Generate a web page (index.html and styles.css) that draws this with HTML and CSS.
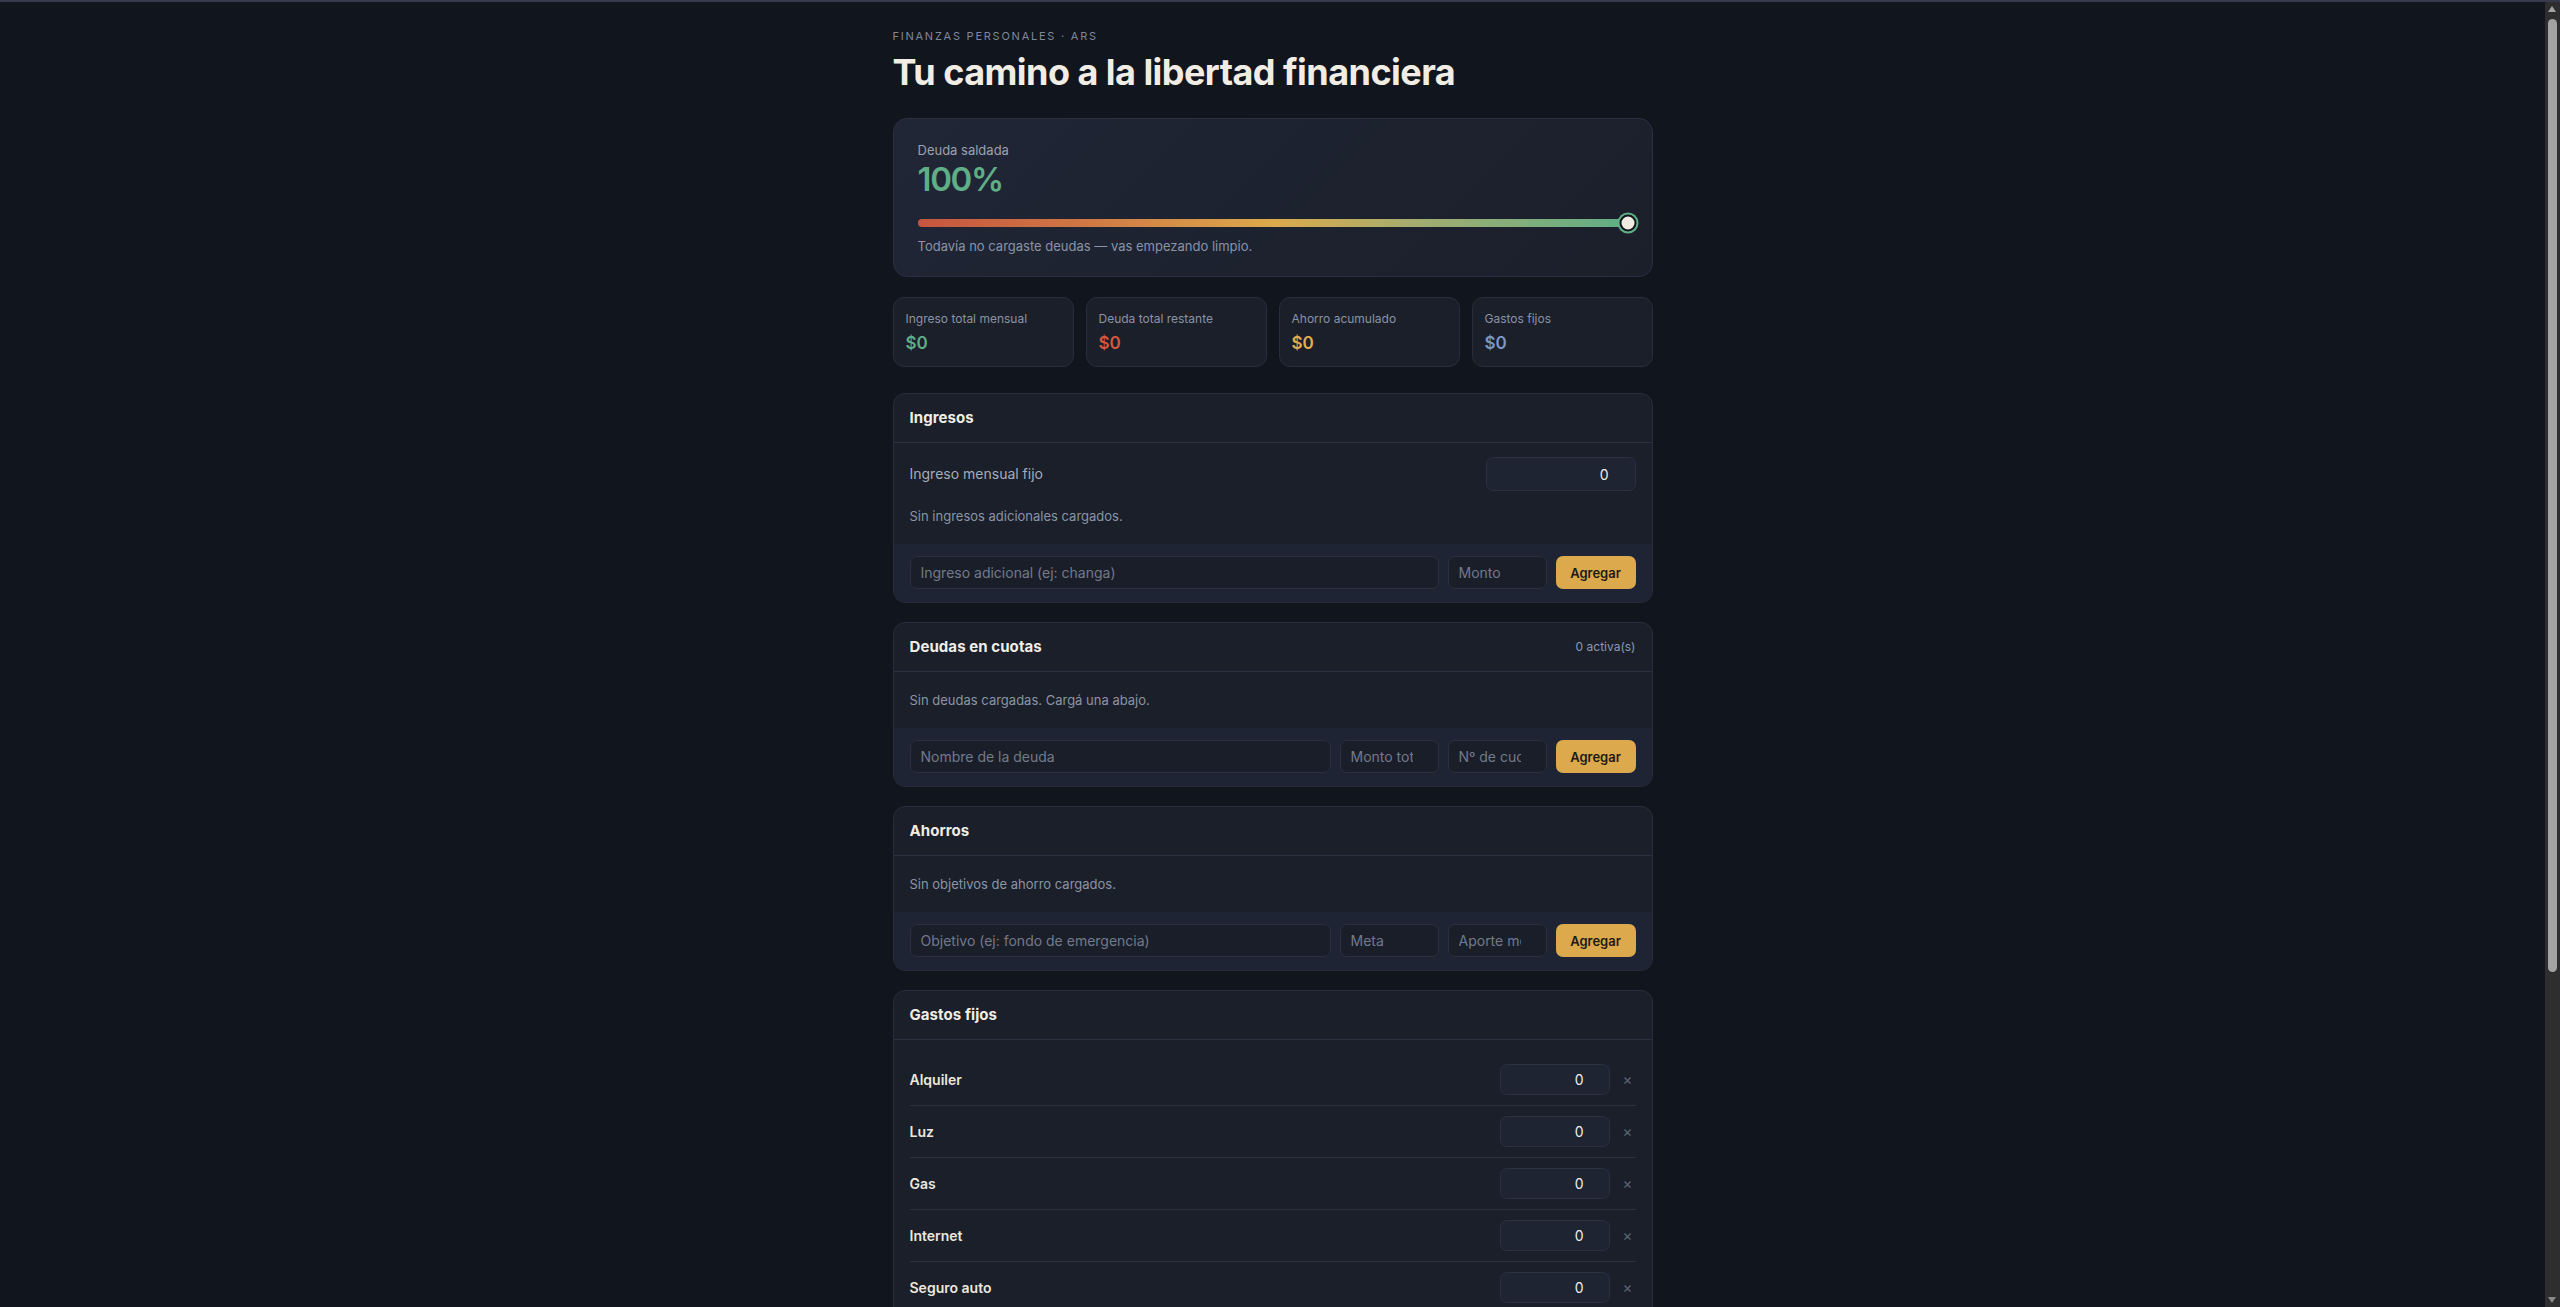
FILE: index.html
```html
<!DOCTYPE html>
<html lang="es">
<head>
<meta charset="utf-8">
<title>Finanzas personales</title>
<link rel="stylesheet" href="styles.css">
</head>
<body>
<main class="wrap">
  <header class="page-head">
    <p class="eyebrow">FINANZAS PERSONALES · ARS</p>
    <h1 class="title">Tu camino a la libertad financiera</h1>
  </header>

  <section class="progress-card">
    <div class="progress-label">Deuda saldada</div>
    <div class="progress-value">100%</div>
    <div class="bar">
      <div class="bar-fill"></div>
      <span class="knob"></span>
    </div>
    <p class="progress-note">Todavía no cargaste deudas — vas empezando limpio.</p>
  </section>

  <div class="stats">
    <div class="stat">
      <div class="stat-label">Ingreso total mensual</div>
      <div class="stat-value green">$0</div>
    </div>
    <div class="stat">
      <div class="stat-label">Deuda total restante</div>
      <div class="stat-value red">$0</div>
    </div>
    <div class="stat">
      <div class="stat-label">Ahorro acumulado</div>
      <div class="stat-value yellow">$0</div>
    </div>
    <div class="stat">
      <div class="stat-label">Gastos fijos</div>
      <div class="stat-value blue">$0</div>
    </div>
  </div>

  <section class="panel panel-first">
    <div class="panel-head">
      <h2 class="panel-title">Ingresos</h2>
    </div>
    <div class="panel-body panel-body-income">
      <div class="field-row">
        <span class="field-label">Ingreso mensual fijo</span>
        <input class="num-input num-wide" type="number" value="0">
      </div>
      <p class="empty">Sin ingresos adicionales cargados.</p>
    </div>
    <div class="panel-foot foot-income">
      <input class="text-input" type="text" placeholder="Ingreso adicional (ej: changa)">
      <input class="text-input text-num" type="number" placeholder="Monto">
      <button class="btn" type="button">Agregar</button>
    </div>
  </section>

  <section class="panel">
    <div class="panel-head">
      <h2 class="panel-title">Deudas en cuotas</h2>
      <span class="panel-meta">0 activa(s)</span>
    </div>
    <div class="panel-body">
      <p class="empty">Sin deudas cargadas. Cargá una abajo.</p>
    </div>
    <div class="panel-foot foot-triple">
      <input class="text-input" type="text" placeholder="Nombre de la deuda">
      <input class="text-input text-num" type="number" placeholder="Monto total">
      <input class="text-input text-num" type="number" placeholder="Nº de cuotas">
      <button class="btn" type="button">Agregar</button>
    </div>
  </section>

  <section class="panel">
    <div class="panel-head">
      <h2 class="panel-title">Ahorros</h2>
    </div>
    <div class="panel-body">
      <p class="empty">Sin objetivos de ahorro cargados.</p>
    </div>
    <div class="panel-foot foot-triple">
      <input class="text-input" type="text" placeholder="Objetivo (ej: fondo de emergencia)">
      <input class="text-input text-num" type="number" placeholder="Meta">
      <input class="text-input text-num" type="number" placeholder="Aporte mensual">
      <button class="btn" type="button">Agregar</button>
    </div>
  </section>

  <section class="panel">
    <div class="panel-head">
      <h2 class="panel-title">Gastos fijos</h2>
    </div>
    <div class="panel-body panel-body-list">
      <div class="expense">
        <span class="expense-name">Alquiler</span>
        <input class="num-input num-small" type="number" value="0">
        <button class="remove" type="button">×</button>
      </div>
      <div class="expense">
        <span class="expense-name">Luz</span>
        <input class="num-input num-small" type="number" value="0">
        <button class="remove" type="button">×</button>
      </div>
      <div class="expense">
        <span class="expense-name">Gas</span>
        <input class="num-input num-small" type="number" value="0">
        <button class="remove" type="button">×</button>
      </div>
      <div class="expense">
        <span class="expense-name">Internet</span>
        <input class="num-input num-small" type="number" value="0">
        <button class="remove" type="button">×</button>
      </div>
      <div class="expense">
        <span class="expense-name">Seguro auto</span>
        <input class="num-input num-small" type="number" value="0">
        <button class="remove" type="button">×</button>
      </div>
      <div class="expense">
        <span class="expense-name">Celular</span>
        <input class="num-input num-small" type="number" value="0">
        <button class="remove" type="button">×</button>
      </div>
    </div>
    <div class="panel-foot foot-income">
      <input class="text-input" type="text" placeholder="Nuevo gasto fijo">
      <input class="text-input text-num" type="number" placeholder="Monto">
      <button class="btn" type="button">Agregar</button>
    </div>
  </section>
</main>

<div class="scrollbar" aria-hidden="true">
  <span class="sb-arrow sb-up"></span>
  <span class="sb-thumb"></span>
  <span class="sb-arrow sb-down"></span>
</div>
</body>
</html>
```

FILE: styles.css
```css
html {
  color-scheme: dark;
  background: #11151d;
}

* {
  box-sizing: border-box;
}

body {
  margin: 0;
  padding-right: 15px;
  border-top: 2px solid #363a4c;
  background: #11151d;
  color: #f1ede4;
  font-family: Inter, "Noto Sans", "Liberation Sans", sans-serif;
  font-size: 13px;
}

.wrap {
  max-width: 760px;
  margin: 0 auto;
  padding: 26px 0 120px;
}

/* header */
.page-head {
  margin-bottom: 24px;
}

.eyebrow {
  margin: 0;
  font-size: 11px;
  line-height: 16px;
  letter-spacing: 0.16em;
  color: #7f889b;
}

.title {
  margin: 6px 0 0;
  font-size: 36px;
  line-height: 44px;
  font-weight: 700;
  letter-spacing: -0.015em;
  color: #f1ede4;
}

/* progress card */
.progress-card {
  background: linear-gradient(135deg, #202636 0%, #1b1f2a 100%);
  border: 1px solid #2a3041;
  border-radius: 14px;
  padding: 22px 24px 21px;
}

.progress-label {
  font-size: 13px;
  line-height: 18px;
  color: #9aa2b3;
}

.progress-value {
  font-size: 33px;
  line-height: 40px;
  font-weight: 600;
  letter-spacing: -0.04em;
  color: #5fae86;
}

.bar {
  position: relative;
  margin-top: 20px;
  height: 8px;
  border-radius: 4px;
}

.bar-fill {
  height: 100%;
  border-radius: 4px;
  background: linear-gradient(90deg, #c6553f 0%, #d07a45 25%, #dcaa4c 50%, #a4ad6f 70%, #5fae86 100%);
}

.knob {
  position: absolute;
  left: 100%;
  top: 50%;
  width: 17px;
  height: 17px;
  transform: translate(-50%, -50%);
  border-radius: 50%;
  background: #f0ece2;
  border: 2px solid #12161f;
  box-shadow: 0 0 0 2px #5fae86;
}

.progress-note {
  margin: 10px 0 0;
  font-size: 13px;
  line-height: 18px;
  color: #8a93a6;
}

/* stats */
.stats {
  display: grid;
  grid-template-columns: repeat(4, 1fr);
  gap: 12px;
  margin-top: 20px;
}

.stat {
  background: #1a1f29;
  border: 1px solid #272d3a;
  border-radius: 11px;
  padding: 13px 12px 12px;
}

.stat-label {
  font-size: 12px;
  line-height: 16px;
  color: #8a93a6;
}

.stat-value {
  margin-top: 5px;
  font-size: 17px;
  line-height: 22px;
  font-weight: 600;
}

.green { color: #5fae86; }
.red { color: #d5573f; }
.yellow { color: #e0ae4c; }
.blue { color: #7b96c8; }

/* panels */
.panel {
  margin-top: 19px;
  background: #1a1f29;
  border: 1px solid #272d3a;
  border-radius: 12px;
  overflow: hidden;
}

.panel-first {
  margin-top: 26px;
}

.panel-head {
  display: flex;
  align-items: center;
  justify-content: space-between;
  padding: 14px 16px;
  border-bottom: 1px solid #2a3040;
}

.panel-title {
  margin: 0;
  font-size: 15px;
  line-height: 20px;
  font-weight: 700;
  letter-spacing: 0.005em;
  color: #f1ede4;
}

.panel-meta {
  font-size: 12px;
  line-height: 20px;
  color: #8a99b6;
}

.panel-body {
  padding: 19px 16px 19px;
}

.panel-body-income {
  padding: 14px 16px 19px;
}

.panel-body-list {
  padding: 14px 16px 0;
}

.empty {
  margin: 0;
  font-size: 13px;
  line-height: 18px;
  color: #8b94a7;
}

.field-row {
  display: flex;
  align-items: center;
  justify-content: space-between;
  margin-bottom: 16px;
}

.field-label {
  font-size: 14px;
  line-height: 20px;
  color: #a4acbc;
}

.num-input {
  font-family: inherit;
  font-size: 14px;
  color: #f1ede4;
  text-align: right;
  background: #1f2433;
  border: 1px solid #2b3143;
  border-radius: 7px;
  padding: 0 26px 0 10px;
  outline: none;
  -moz-appearance: textfield;
}

.num-input::-webkit-inner-spin-button,
.num-input::-webkit-outer-spin-button,
.text-input::-webkit-inner-spin-button,
.text-input::-webkit-outer-spin-button {
  -webkit-appearance: none;
  margin: 0;
}

.num-wide {
  width: 150px;
  height: 34px;
}

.num-small {
  width: 110px;
  height: 31px;
  padding-right: 25px;
}

.panel-foot {
  display: grid;
  gap: 9px;
  padding: 12px 16px 13px;
  background: #1f2435;
}

.foot-income {
  grid-template-columns: 1fr 99px 80px;
}

.foot-triple {
  grid-template-columns: 1fr 99px 99px 80px;
}

.text-input {
  min-width: 0;
  height: 33px;
  font-family: inherit;
  font-size: 14px;
  color: #f1ede4;
  background: #1a1e29;
  border: 1px solid #2a3040;
  border-radius: 7px;
  padding: 0 10px;
  outline: none;
  -moz-appearance: textfield;
}

.text-num {
  padding-right: 25px;
}

.text-input::placeholder {
  color: #727a8b;
}

.btn {
  height: 33px;
  font-family: inherit;
  font-size: 13px;
  font-weight: 600;
  color: #1b1a17;
  background: #dcaa4c;
  border: none;
  border-radius: 7px;
  padding: 0;
  cursor: pointer;
}

/* expenses */
.expense {
  display: flex;
  align-items: center;
  gap: 10px;
  padding: 10px 0;
  border-bottom: 1px solid #2a3040;
}

.expense-name {
  flex: 1;
  font-size: 14px;
  line-height: 20px;
  font-weight: 600;
  color: #ebe7de;
}

.remove {
  width: 16px;
  padding: 0;
  background: none;
  border: none;
  font-family: inherit;
  font-size: 15px;
  line-height: 20px;
  color: #5b6475;
  cursor: pointer;
}

/* imitation of the window's dark scrollbar (overlays the page edge) */
.scrollbar {
  position: fixed;
  top: 2px;
  right: 0;
  bottom: 0;
  width: 15px;
  background: #2e2e2e;
}

.sb-thumb {
  position: absolute;
  top: 17px;
  left: 3px;
  width: 9px;
  height: 953px;
  border-radius: 5px;
  background: #a3a3a3;
}

.sb-arrow {
  position: absolute;
  left: 3px;
  width: 0;
  height: 0;
  border-left: 4.5px solid transparent;
  border-right: 4.5px solid transparent;
}

.sb-up {
  top: 4px;
  border-bottom: 6px solid #a3a3a3;
}

.sb-down {
  bottom: 4px;
  border-top: 6px solid #8a8a8a;
}
```
